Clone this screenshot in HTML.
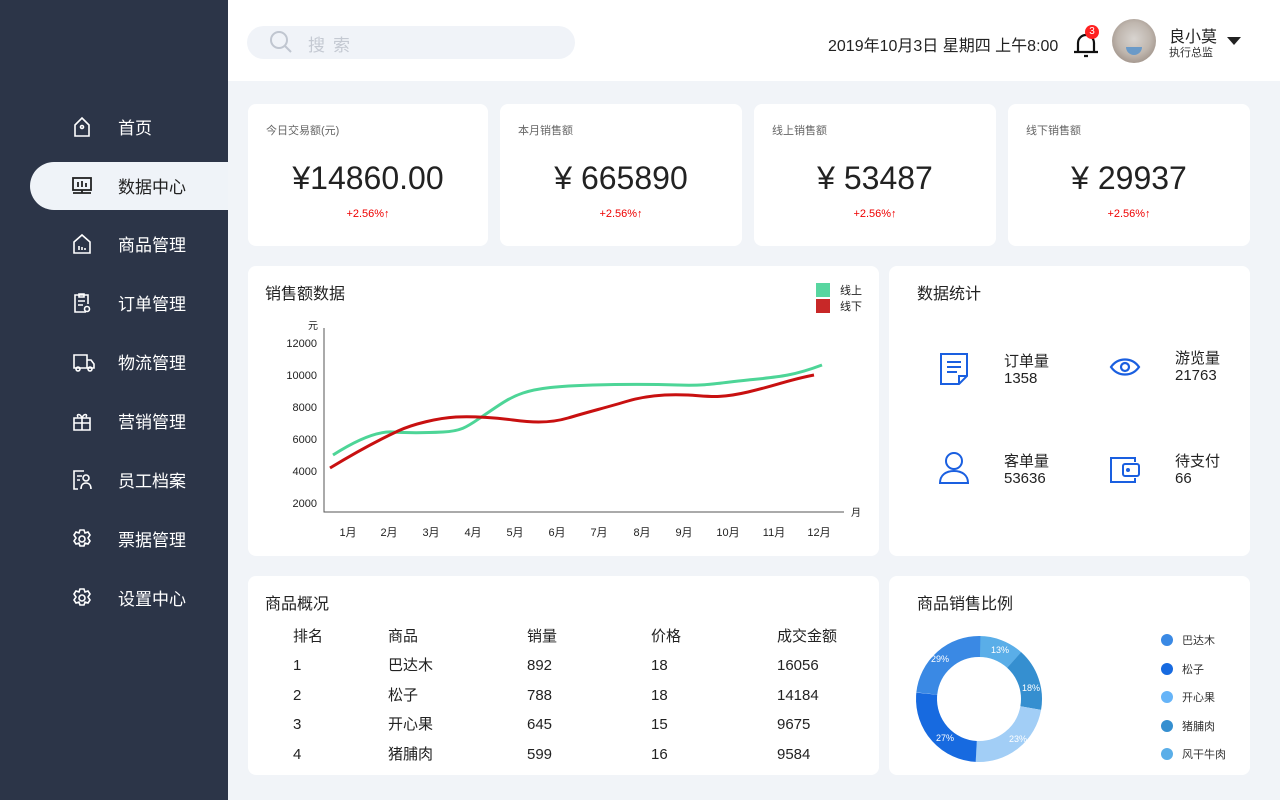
<!DOCTYPE html>
<html><head><meta charset="utf-8"><style>
*{margin:0;padding:0;box-sizing:border-box}
body{width:1280px;height:800px;overflow:hidden;background:#f1f4f8;font-family:"Liberation Sans","Noto Sans CJK SC",sans-serif;color:#222;position:relative}
.side{position:absolute;left:0;top:0;width:228px;height:800px;background:#2c3548}
.nav{position:absolute;left:0;width:228px;height:48px;color:#fff;font-size:17px}
.nav span{position:absolute;left:118px;top:11px}
.nav svg{position:absolute;left:72px;top:13px}
.nav.act{left:30px;width:198px;background:#eff3f8;border-radius:24px 0 0 24px;color:#222}
.nav.act span{left:88px}.nav.act svg{left:42px}
.top{position:absolute;left:228px;top:0;width:1052px;height:81px;background:#fff}
.card{position:absolute;background:#fff;border-radius:8px}
.k small{position:absolute;left:18px;top:18px;font-size:11px;color:#666}
.k b{position:absolute;left:0;width:100%;text-align:center;top:56px;font-size:32px;font-weight:normal;color:#222}
.k i{position:absolute;left:0;width:100%;text-align:center;top:104px;font-size:11px;color:#e00;font-style:normal}
.t{position:absolute;left:17px;top:14px;font-size:16px;color:#222}
.tb{position:absolute;font-size:15px;color:#222}
</style></head><body>
<div class="side">
<div class="nav" style="top:103px"><svg width="20" height="22" viewBox="0 0 20 22" fill="none" stroke="#fff" stroke-width="1.6"><path d="M3 9L10 2l7 7v11H3z"/><circle cx="10" cy="11" r="1.5"/></svg><span>首页</span></div>
<div class="nav act" style="top:162px"><svg width="20" height="22" viewBox="0 0 20 22" fill="none" stroke="#222" stroke-width="1.8"><rect x="1" y="3" width="18" height="12"/><path d="M6 7v5M10 6v6M14 8v4M1 18h18M10 15v3"/></svg><span>数据中心</span></div>
<div class="nav" style="top:220px"><svg width="20" height="22" viewBox="0 0 20 22" fill="none" stroke="#fff" stroke-width="1.6"><path d="M2 9L10 2l8 7v11H2z"/><path d="M7 17v-4M10 17v-3M13 17v-2"/></svg><span>商品管理</span></div>
<div class="nav" style="top:279px"><svg width="20" height="22" viewBox="0 0 20 22" fill="none" stroke="#fff" stroke-width="1.6"><path d="M14 20H3V3h13v9"/><path d="M7 2h5v3H7zM6 9h7M6 13h5"/><circle cx="15" cy="17" r="2.5"/></svg><span>订单管理</span></div>
<div class="nav" style="top:338px"><svg width="24" height="22" viewBox="0 0 24 22" fill="none" stroke="#fff" stroke-width="1.6"><path d="M2 4h13v13H2zM15 9h4l3 4v4h-7"/><circle cx="6" cy="18" r="2"/><circle cx="18" cy="18" r="2"/></svg><span>物流管理</span></div>
<div class="nav" style="top:397px"><svg width="20" height="22" viewBox="0 0 20 22" fill="none" stroke="#fff" stroke-width="1.6"><path d="M2 8h16v12H2zM2 13h16M10 8v12M10 8C8 3 4 4 6 7M10 8c2-5 6-4 4-1"/></svg><span>营销管理</span></div>
<div class="nav" style="top:456px"><svg width="20" height="22" viewBox="0 0 20 22" fill="none" stroke="#fff" stroke-width="1.6"><path d="M12 2H2v18h4M5 7h5M5 11h3"/><circle cx="14" cy="9" r="3"/><path d="M9 20c0-4 2-6 5-6s5 2 5 6"/></svg><span>员工档案</span></div>
<div class="nav" style="top:515px"><svg width="20" height="22" viewBox="0 0 20 22" fill="none" stroke="#fff" stroke-width="1.6"><path d="M8 2h4l1 3 3-1 2 3-2 3 2 3-2 3-3-1-1 3H8l-1-3-3 1-2-3 2-3-2-3 2-3 3 1z"/><circle cx="10" cy="11" r="3"/></svg><span>票据管理</span></div>
<div class="nav" style="top:574px"><svg width="20" height="22" viewBox="0 0 20 22" fill="none" stroke="#fff" stroke-width="1.6"><path d="M8 2h4l1 3 3-1 2 3-2 3 2 3-2 3-3-1-1 3H8l-1-3-3 1-2-3 2-3-2-3 2-3 3 1z"/><circle cx="10" cy="11" r="3"/></svg><span>设置中心</span></div>
</div>
<div class="top">
<div style="position:absolute;left:19px;top:26px;width:328px;height:33px;background:#f0f3f8;border-radius:17px"></div>
<svg style="position:absolute;left:41px;top:30px" width="24" height="24" viewBox="0 0 24 24" fill="none" stroke="#c0c6d0" stroke-width="2"><circle cx="10" cy="10" r="8"/><path d="M16 16l6 6"/></svg>
<div style="position:absolute;left:80px;top:31px;font-size:17px;color:#c4c9d2;letter-spacing:8px">搜索</div>
<div style="position:absolute;left:600px;top:32px;font-size:16px;color:#222">2019年10月3日 星期四 上午8:00</div>
<svg style="position:absolute;left:844px;top:30px" width="28" height="28" viewBox="0 0 28 28" fill="none" stroke="#111" stroke-width="2.2"><path d="M6 22V13a8 8 0 0 1 16 0v9M2 22h24M12 26h4"/></svg>
<div style="position:absolute;left:857px;top:25px;width:14px;height:14px;border-radius:7px;background:#f22;color:#fff;font-size:10px;text-align:center;line-height:14px">3</div>
<div style="position:absolute;left:884px;top:19px;width:44px;height:44px;border-radius:22px;background:radial-gradient(circle at 50% 45%,#d8d4d0 0,#bfb6ae 50%,#8a7a70 100%)"><div style="position:absolute;left:14px;top:28px;width:16px;height:8px;border-radius:0 0 8px 8px;background:#6a9ac8"></div></div>
<div style="position:absolute;left:941px;top:23px;font-size:16px;color:#222">良小莫</div>
<div style="position:absolute;left:941px;top:44px;font-size:11px;color:#333">执行总监</div>
<div style="position:absolute;left:999px;top:37px;width:0;height:0;border-left:7px solid transparent;border-right:7px solid transparent;border-top:8px solid #222"></div>
</div>

<div class="card k" style="left:248px;top:104px;width:240px;height:142px"><small>今日交易额(元)</small><b>¥14860.00</b><i>+2.56%↑</i></div>
<div class="card k" style="left:500px;top:104px;width:242px;height:142px"><small>本月销售额</small><b>¥ 665890</b><i>+2.56%↑</i></div>
<div class="card k" style="left:754px;top:104px;width:242px;height:142px"><small>线上销售额</small><b>¥ 53487</b><i>+2.56%↑</i></div>
<div class="card k" style="left:1008px;top:104px;width:242px;height:142px"><small>线下销售额</small><b>¥ 29937</b><i>+2.56%↑</i></div>

<div class="card" style="left:248px;top:266px;width:631px;height:290px"><div class="t">销售额数据</div></div>
<svg style="position:absolute;left:248px;top:266px" width="631" height="290" font-size="11" fill="#222">
<rect x="568" y="17" width="14" height="14" fill="#58d6a0"/><rect x="568" y="33" width="14" height="14" fill="#c82828"/>
<text x="592" y="28" font-size="11">线上</text><text x="592" y="44" font-size="11">线下</text>
<path d="M76 62V246H596" stroke="#555" stroke-width="1" fill="none"/>
<text x="60" y="63" font-size="10">元</text><text x="603" y="250" font-size="10">月</text>
<g text-anchor="end" font-size="11"><text x="69" y="81">12000</text><text x="69" y="113">10000</text><text x="69" y="145">8000</text><text x="69" y="177">6000</text><text x="69" y="209">4000</text><text x="69" y="241">2000</text></g>
<g text-anchor="middle" font-size="11"><text x="100" y="270">1月</text><text x="141" y="270">2月</text><text x="183" y="270">3月</text><text x="225" y="270">4月</text><text x="267" y="270">5月</text><text x="309" y="270">6月</text><text x="351" y="270">7月</text><text x="394" y="270">8月</text><text x="436" y="270">9月</text><text x="480" y="270">10月</text><text x="526" y="270">11月</text><text x="571" y="270">12月</text></g>
<path d="M85 189C110 173 130 165 145 166S175 167 195 166 220 160 235 150 260 132 275 127 310 120 345 119 400 118 430 119 470 117 500 114 545 110 574 99" stroke="#4dd597" stroke-width="3" fill="none"/>
<path d="M82 202C110 185 135 172 150 165S190 152 208 151 250 152 265 154 300 158 320 152 360 141 380 135 420 128 440 129 470 133 500 126 540 114 566 109" stroke="#c81010" stroke-width="3" fill="none"/>
</svg>

<div class="card" style="left:889px;top:266px;width:361px;height:290px"><div class="t" style="left:28px">数据统计</div>
<svg style="position:absolute;left:50px;top:86px" width="30" height="34" viewBox="0 0 30 34" fill="none" stroke="#1a5fe0" stroke-width="2"><path d="M2 2h26v22l-8 8H2z"/><path d="M20 32v-8h8M8 10h14M8 15h14M8 20h10"/></svg>
<div class="tb" style="left:115px;top:84px">订单量</div><div class="tb" style="left:115px;top:104px">1358</div>
<svg style="position:absolute;left:220px;top:90px" width="32" height="22" viewBox="0 0 32 22" fill="none" stroke="#1a5fe0" stroke-width="2.2"><path d="M2 11C9 1 23 1 30 11 23 21 9 21 2 11z"/><circle cx="16" cy="11" r="4"/></svg>
<div class="tb" style="left:286px;top:81px">游览量</div><div class="tb" style="left:286px;top:101px">21763</div>
<svg style="position:absolute;left:49px;top:185px" width="32" height="34" viewBox="0 0 32 34" fill="none" stroke="#1a5fe0" stroke-width="2"><circle cx="16" cy="10" r="8"/><path d="M2 32c0-8 6-12 14-12s14 4 14 12z"/></svg>
<div class="tb" style="left:115px;top:184px">客单量</div><div class="tb" style="left:115px;top:204px">53636</div>
<svg style="position:absolute;left:220px;top:190px" width="32" height="28" viewBox="0 0 32 28" fill="none" stroke="#1a5fe0" stroke-width="2"><path d="M26 6V2H2v24h24v-4"/><rect x="14" y="8" width="16" height="12" rx="2"/><circle cx="19" cy="14" r="1" fill="#1a5fe0"/></svg>
<div class="tb" style="left:286px;top:184px">待支付</div><div class="tb" style="left:286px;top:204px">66</div>
</div>

<div class="card" style="left:248px;top:576px;width:631px;height:199px"><div class="t">商品概况</div>
<svg width="631" height="199" style="position:absolute;left:0;top:0" font-size="15" fill="#222">
<g><text x="45" y="65">排名</text><text x="140" y="65">商品</text><text x="279" y="65">销量</text><text x="403" y="65">价格</text><text x="529" y="65">成交金额</text></g>
<g><text x="45" y="94">1</text><text x="140" y="94">巴达木</text><text x="279" y="94">892</text><text x="403" y="94">18</text><text x="529" y="94">16056</text></g>
<g><text x="45" y="124">2</text><text x="140" y="124">松子</text><text x="279" y="124">788</text><text x="403" y="124">18</text><text x="529" y="124">14184</text></g>
<g><text x="45" y="153">3</text><text x="140" y="153">开心果</text><text x="279" y="153">645</text><text x="403" y="153">15</text><text x="529" y="153">9675</text></g>
<g><text x="45" y="183">4</text><text x="140" y="183">猪脯肉</text><text x="279" y="183">599</text><text x="403" y="183">16</text><text x="529" y="183">9584</text></g>
</svg></div>

<div class="card" style="left:889px;top:576px;width:361px;height:199px"><div class="t" style="left:28px">商品销售比例</div>
<svg width="361" height="199" style="position:absolute;left:0;top:0">
<g transform="translate(90,123)" stroke-width="21" fill="none">
<circle r="52.5" stroke="#5aaee8" stroke-dasharray="38.5 400" transform="rotate(-90)"/>
<circle r="52.5" stroke="#358fd0" stroke-dasharray="53 400" transform="rotate(-48)"/>
<circle r="52.5" stroke="#a2cef6" stroke-dasharray="76 400" transform="rotate(10)"/>
<circle r="52.5" stroke="#176ae0" stroke-dasharray="85 400" transform="rotate(93)"/>
<circle r="52.5" stroke="#3a89e4" stroke-dasharray="78 400" transform="rotate(186)"/>
</g>
<g fill="#fff" font-size="9" text-anchor="middle"><text x="111" y="77">13%</text><text x="142" y="115">18%</text><text x="129" y="166">23%</text><text x="56" y="165">27%</text><text x="51" y="86">29%</text></g>
<g font-size="11" fill="#333"><circle cx="278" cy="64" r="6" fill="#3a89e4"/><text x="293" y="68">巴达木</text>
<circle cx="278" cy="93" r="6" fill="#176ae0"/><text x="293" y="97">松子</text>
<circle cx="278" cy="121" r="6" fill="#66b4f8"/><text x="293" y="125">开心果</text>
<circle cx="278" cy="150" r="6" fill="#358fd0"/><text x="293" y="154">猪脯肉</text>
<circle cx="278" cy="178" r="6" fill="#5aaee8"/><text x="293" y="182">风干牛肉</text></g>
</svg></div>
</body></html>
